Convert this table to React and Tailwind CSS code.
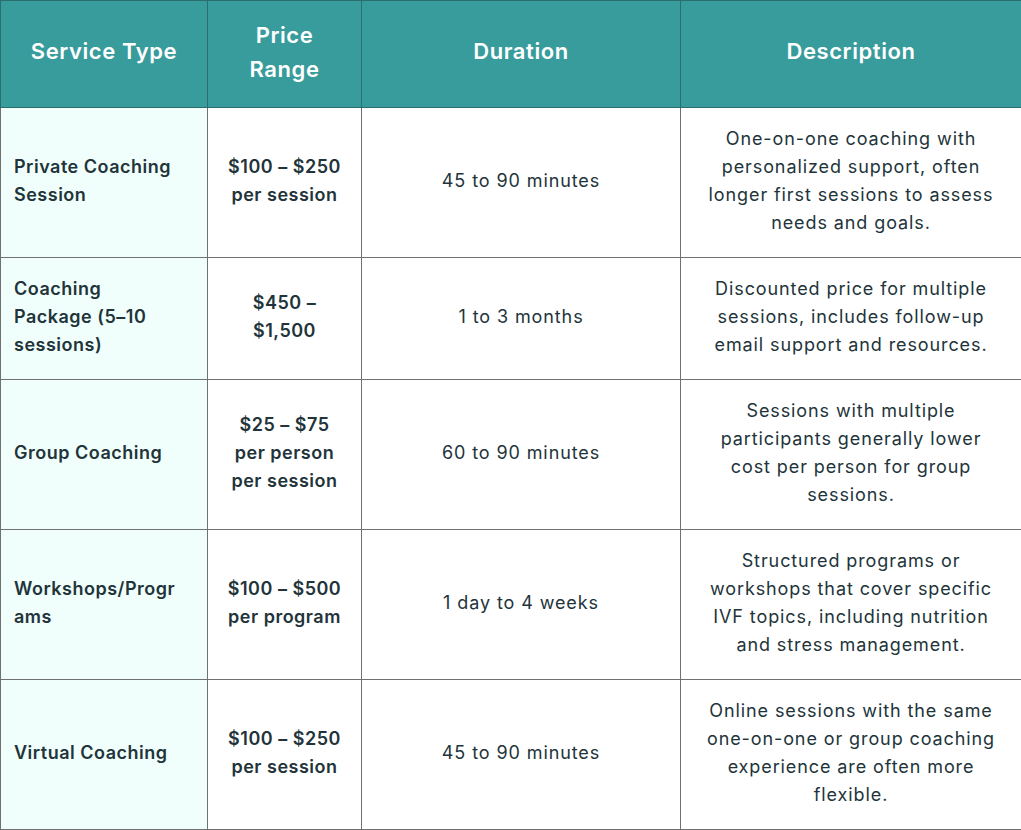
import React from "react";

const rows = [
  {
    type: ["Private Coaching", "Session"],
    price: ["$100 – $250", "per session"],
    duration: "45 to 90 minutes",
    desc: ["One-on-one coaching with", "personalized support, often", "longer first sessions to assess", "needs and goals."],
    h: "h-[150px]",
  },
  {
    type: ["Coaching", "Package (5–10", "sessions)"],
    price: ["$450 –", "$1,500"],
    duration: "1 to 3 months",
    desc: ["Discounted price for multiple", "sessions, includes follow-up", "email support and resources."],
    h: "h-[122px]",
  },
  {
    type: ["Group Coaching"],
    price: ["$25 – $75", "per person", "per session"],
    duration: "60 to 90 minutes",
    desc: ["Sessions with multiple", "participants generally lower", "cost per person for group", "sessions."],
    h: "h-[150px]",
  },
  {
    type: ["Workshops/Progr", "ams"],
    price: ["$100 – $500", "per program"],
    duration: "1 day to 4 weeks",
    desc: ["Structured programs or", "workshops that cover specific", "IVF topics, including nutrition", "and stress management."],
    h: "h-[150px]",
  },
  {
    type: ["Virtual Coaching"],
    price: ["$100 – $250", "per session"],
    duration: "45 to 90 minutes",
    desc: ["Online sessions with the same", "one-on-one or group coaching", "experience are often more", "flexible."],
    h: "h-[150px]",
  },
];

const Lines = ({ lines }) =>
  lines.map((l, i) => (
    <span key={i} className="block whitespace-nowrap">
      {l}
    </span>
  ));

export default function App() {
  return (
    <div className="w-[1021px] h-[830px] bg-white" style={{ fontFamily: "Inter, 'Noto Sans', sans-serif" }}>
      <table className="w-[1021px] border-collapse table-fixed text-[#22343a]">
        <colgroup>
          <col className="w-[207px]" />
          <col className="w-[154px]" />
          <col className="w-[319px]" />
          <col className="w-[341px]" />
        </colgroup>
        <thead>
          <tr className="h-[107px] bg-[#389c9c] text-white text-[22px] font-semibold leading-[34px] tracking-[0.6px]">
            <th className="border border-[#2c6e6e] font-semibold pb-[6px]">Service Type</th>
            <th className="border border-[#2c6e6e] font-semibold pb-[5px]">
              <span className="block">Price</span>
              <span className="block">Range</span>
            </th>
            <th className="border border-[#2c6e6e] font-semibold pb-[6px]">Duration</th>
            <th className="border border-[#2c6e6e] font-semibold pb-[6px]">Description</th>
          </tr>
        </thead>
        <tbody className="text-[18px] leading-[28px] tracking-[0.9px]">
          {rows.map((r, i) => (
            <tr key={i} className={r.h}>
              <td className="border border-[#707070] bg-[#f0fffc] pl-[13px] pr-0 font-semibold tracking-[0.5px] pb-[3px]">
                <Lines lines={r.type} />
              </td>
              <td className="border border-[#707070] text-center font-semibold tracking-[0.5px] pb-[3px]">
                <Lines lines={r.price} />
              </td>
              <td className="border border-[#707070] text-center pb-[3px]">{r.duration}</td>
              <td className="border border-[#707070] text-center pb-[3px]">
                <Lines lines={r.desc} />
              </td>
            </tr>
          ))}
        </tbody>
      </table>
    </div>
  );
}
